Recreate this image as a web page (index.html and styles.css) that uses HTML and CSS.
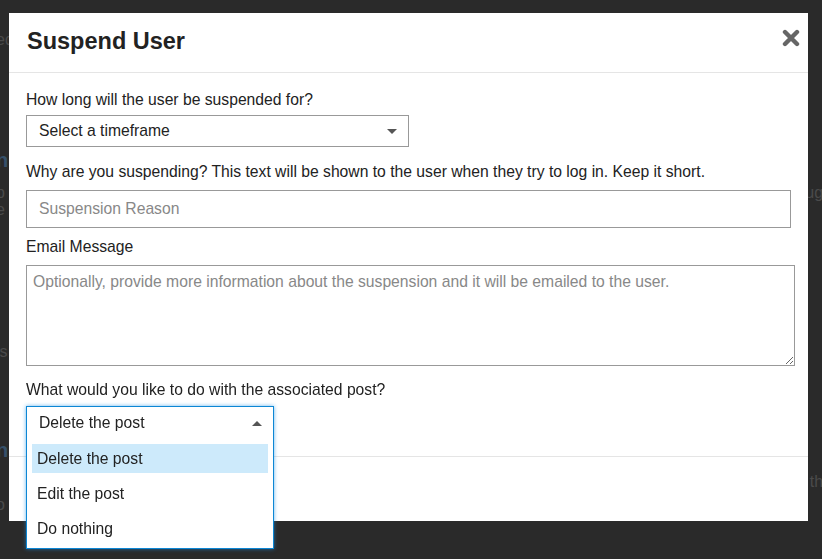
FILE: index.html
```html
<!DOCTYPE html>
<html lang="en">
<head>
  <meta charset="UTF-8" />
  <title>Suspend User</title>
  <link rel="stylesheet" href="styles.css">
</head>
<body>
  <div class="page">
    <div class="bg-line l1"><span>ed</span></div>
    <div class="bg-line bg-head l2"><span>n</span></div>
    <div class="bg-line l3"><span>p</span><span>ugh</span></div>
    <div class="bg-line l4"><span>e</span></div>
    <div class="bg-line l5"><span>is</span></div>
    <div class="bg-line bg-head l6"><span>n</span></div>
    <div class="bg-line l7"><span>l</span><span>the</span></div>
    <div class="bg-line l8"><span>o</span></div>
  </div>

  <div class="overlay">
    <div class="modal">
      <div class="modal-header">
        <h2>Suspend User</h2>
        <button class="close" aria-label="Close">
          <svg width="18" height="18" viewBox="0 0 18 18">
            <path d="M3 3 L15 15 M15 3 L3 15" stroke="#666" stroke-width="4.4" stroke-linecap="round" fill="none"/>
          </svg>
        </button>
      </div>

      <div class="modal-body">
        <div class="field field-first">
          <label>How long will the user be suspended for?</label>
          <div class="select select-time">
            <span>Select a timeframe</span>
            <span class="caret down"></span>
          </div>
        </div>

        <div class="field field-tight">
          <label>Why are you suspending? This text will be shown to the user when they try to log in. Keep it short.</label>
          <input type="text" class="text-input" placeholder="Suspension Reason" />
        </div>

        <div class="field">
          <label>Email Message</label>
          <textarea class="text-area" placeholder="Optionally, provide more information about the suspension and it will be emailed to the user."></textarea>
        </div>

        <div class="field field-last">
          <label>What would you like to do with the associated post?</label>
          <div class="dropdown">
            <div class="dropdown-open">
              <div class="dropdown-head">
                <span>Delete the post</span>
                <span class="caret up"></span>
              </div>
              <ul class="dropdown-list">
                <li class="active">Delete the post</li>
                <li>Edit the post</li>
                <li>Do nothing</li>
              </ul>
            </div>
          </div>
        </div>
      </div>

      <div class="modal-footer"></div>
    </div>
  </div>
</body>
</html>
```

FILE: styles.css
```css
html, body {
  margin: 0;
  height: 100%;
  overflow: hidden;
}
body {
  font-family: Arial, "Liberation Sans", sans-serif;
  background: #2a2a2a;
  color: #222;
}

/* page behind the overlay */
.page {
  width: 836px;
  margin-left: -4px;
  color: #4b4b4b;
  font-size: 16px;
}
.bg-line {
  display: flex;
  justify-content: space-between;
  height: 17px;
  line-height: 17px;
}
.bg-head {
  height: 22px;
  line-height: 22px;
  font-size: 20px;
  font-weight: bold;
  color: #36516a;
}
.l1 { margin-top: 31px; }
.l2 { margin-top: 101px; }
.l3 { margin-top: 13px; }
.l5 { margin-top: 125px; }
.l6 { margin-top: 79px; }
.l7 { margin-top: 12px; }
.l8 { margin-top: 6px; }

/* modal */
.overlay {
  position: fixed;
  inset: 0;
  display: flex;
  align-items: flex-start;
  padding: 13px 0 0 9px;
}
.modal {
  width: 799px;
  height: 508px;
  background: #fff;
  display: flex;
  flex-direction: column;
}
.modal-header {
  height: 60px;
  border-bottom: 1px solid #e5e5e5;
  display: flex;
  align-items: center;
  justify-content: space-between;
  padding: 0 7px 0 18px;
  box-sizing: border-box;
}
.modal-header h2 {
  margin: 0;
  font-size: 23.5px;
  font-weight: bold;
  color: #222;
  margin-top: -2px;
}
.close {
  border: none;
  background: none;
  padding: 0;
  width: 20px;
  height: 20px;
  display: flex;
  align-items: center;
  justify-content: center;
  margin-top: -10px;
}

.modal-body {
  padding: 17px 17px 16px;
  font-size: 15.7px;
}
.field {
  margin-bottom: 14px;
}
.field-first {
  margin-bottom: 15px;
}
.field-tight {
  margin-bottom: 9px;
}
.field-last {
  margin-bottom: 0;
}
.field label {
  display: block;
  line-height: 20px;
  margin-bottom: 8px;
  color: #222;
}
.field-first label {
  margin-bottom: 5px;
}
.field-last label {
  margin-bottom: 6px;
}

.select {
  box-sizing: border-box;
  height: 32px;
  border: 1px solid #999;
  display: flex;
  align-items: center;
  justify-content: space-between;
  padding: 0 11px 0 12px;
}
.select-time {
  width: 383px;
}
.caret {
  width: 0;
  height: 0;
  border-left: 5px solid transparent;
  border-right: 5px solid transparent;
}
.caret.down {
  border-top: 5px solid #555;
}
.caret.up {
  border-bottom: 5px solid #555;
}

.text-input {
  box-sizing: border-box;
  display: block;
  width: 100%;
  height: 38px;
  border: 1px solid #999;
  padding: 0 12px;
  font-family: inherit;
  font-size: 15.7px;
  color: #222;
  outline: none;
}
.text-area {
  box-sizing: border-box;
  display: block;
  width: calc(100% + 4px);
  height: 101px;
  border: 1px solid #999;
  padding: 6px 6px;
  font-family: inherit;
  font-size: 15.7px;
  line-height: 20px;
  color: #222;
  outline: none;
}
.text-input::placeholder,
.text-area::placeholder {
  color: #888;
}

/* open dropdown */
.dropdown {
  position: relative;
  width: 248px;
  height: 34px;
}
.dropdown-open {
  position: absolute;
  top: 0;
  left: 0;
  width: 248px;
  box-sizing: border-box;
  background: #fff;
  border: 1px solid #0c86d4;
  box-shadow: 0 0 4px rgba(20, 140, 230, 0.65);
  z-index: 2;
}
.dropdown-head {
  height: 32px;
  display: flex;
  align-items: center;
  justify-content: space-between;
  padding: 0 11px 0 12px;
}
.dropdown-list {
  list-style: none;
  margin: 0;
  padding: 5px;
}
.dropdown-list li {
  height: 29px;
  line-height: 29px;
  padding-left: 5px;
  color: #222;
  margin-bottom: 6px;
}
.dropdown-list li:last-child {
  margin-bottom: 0;
}
.dropdown-list li.active {
  background: #cdeafb;
}

.modal-footer {
  flex: 1;
  border-top: 1px solid #e5e5e5;
}
```
